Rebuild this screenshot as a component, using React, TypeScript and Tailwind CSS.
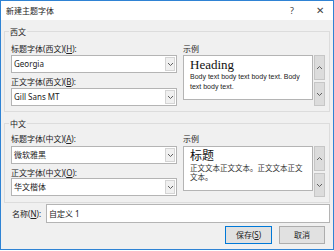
import React from "react";

const ui = { fontFamily: '"Noto Sans", "Noto Sans CJK SC", sans-serif' };

function Chevron({ up }: { up?: boolean }) {
  return (
    <svg width="7" height="5" viewBox="0 0 7 5">
      <path
        d={up ? "M1 4 L3.5 1.5 L6 4" : "M1 1 L3.5 3.5 L6 1"}
        fill="none"
        stroke="#606060"
        strokeWidth="1"
      />
    </svg>
  );
}

function Combo({ value, cjk }: { value: string; cjk?: boolean }) {
  return (
    <div className="flex h-[18px] w-[166px] items-stretch border border-[#b4b4b4] bg-white">
      <div
        className="flex flex-1 items-center pl-[2px] text-[8px] text-[#222]"
        style={cjk ? { fontFamily: '"Noto Sans CJK SC", sans-serif' } : undefined}
      >
        {value}
      </div>
      <div className="m-[1px] flex w-[10px] items-center justify-center border border-[#d4d4d4] bg-[#f0f0f0]">
        <Chevron />
      </div>
    </div>
  );
}

function Scroll() {
  return (
    <div className="flex w-[11px] flex-col gap-[2px]">
      <div className="flex h-[25px] items-center justify-center border border-[#c6c6c6] bg-[#dcdcdc]">
        <Chevron up />
      </div>
      <div className="flex h-[24px] items-center justify-center border border-[#c6c6c6] bg-[#dcdcdc]">
        <Chevron />
      </div>
    </div>
  );
}

function Group({
  title,
  h,
  pt,
  children,
}: {
  title: string;
  h: string;
  pt: string;
  children: React.ReactNode;
}) {
  return (
    <div className={`relative mx-[3px] border border-[#dcdcdc] ${h} ${pt} pl-[6px]`}>
      <span className="absolute left-[4px] top-[-6px] bg-[#f0f0f0] px-[1px] text-[8px] leading-[11px] text-[#222]">
        {title}
      </span>
      {children}
    </div>
  );
}

export default function App() {
  return (
    <div
      className="box-border flex h-[250px] w-[334px] flex-col border border-[#2f83d4] bg-[#f0f0f0] text-[#222]"
      style={ui}
    >
      {/* title bar */}
      <div className="flex h-[19px] items-center bg-white pl-[5px] text-[8px]">
        <span className="flex-1">新建主题字体</span>
        <span className="w-[10px] text-center text-[9px] text-[#444]">?</span>
        <span className="ml-[18px] mr-[8px] w-[10px] text-center text-[10px] text-[#444]">✕</span>
      </div>

      {/* 西文 */}
      <div className="mt-[11px]">
        <Group title="西文" h="h-[81px]" pt="pt-[11px]">
          <div className="flex gap-[6px]">
            <div className="flex flex-col">
              <div className="h-[11px] text-[8px] leading-[11px]">
                标题字体(西文)(<span className="underline">H</span>):
              </div>
              <div className="mt-[1px]">
                <Combo value="Georgia" />
              </div>
              <div className="mt-[3px] h-[11px] text-[8px] leading-[11px]">
                正文字体(西文)(<span className="underline">B</span>):
              </div>
              <div className="mt-[1px]">
                <Combo value="Gill Sans MT" />
              </div>
            </div>
            <div className="flex flex-col">
              <div className="h-[11px] text-[8px] leading-[11px]">示例</div>
              <div className="mt-[1px] flex gap-[1px]">
                <div className="h-[45px] w-[130px] border border-[#b4b4b4] bg-white pl-[6px] pt-[1px]">
                  <div
                    className="text-[13px] leading-[15px] text-[#111]"
                    style={{ fontFamily: '"Liberation Serif", serif' }}
                  >
                    Heading
                  </div>
                  <div
                    className="text-[7px] leading-[10px] text-[#222]"
                    style={{ fontFamily: '"Liberation Sans", sans-serif' }}
                  >
                    Body text body text body text. Body text body text.
                  </div>
                </div>
                <Scroll />
              </div>
            </div>
          </div>
        </Group>
      </div>

      {/* 中文 */}
      <div className="mt-[11px]">
        <Group title="中文" h="h-[80px]" pt="pt-[9px]">
          <div className="flex gap-[6px]">
            <div className="flex flex-col">
              <div className="h-[11px] text-[8px] leading-[11px]">
                标题字体(中文)(<span className="underline">A</span>):
              </div>
              <div className="mt-[2px]">
                <Combo value="微软雅黑" cjk />
              </div>
              <div className="mt-[3px] h-[11px] text-[8px] leading-[11px]">
                正文字体(中文)(<span className="underline">O</span>):
              </div>
              <div>
                <Combo value="华文楷体" cjk />
              </div>
            </div>
            <div className="flex flex-col">
              <div className="h-[11px] text-[8px] leading-[11px]">示例</div>
              <div className="mt-[2px] flex gap-[1px]">
                <div className="h-[45px] w-[130px] border border-[#b4b4b4] bg-white pl-[6px] pr-[8px] pt-[1px]">
                  <div
                    className="text-[12px] leading-[13px] text-[#111]"
                    style={{ fontFamily: '"Noto Sans CJK SC", sans-serif' }}
                  >
                    标题
                  </div>
                  <div
                    className="mt-[2px] text-[7.5px] leading-[9px] text-[#333]"
                    style={{ fontFamily: '"Noto Sans CJK SC", sans-serif' }}
                  >
                    正文文本正文文本。正文文本正文文本。
                  </div>
                </div>
                <Scroll />
              </div>
            </div>
          </div>
        </Group>
      </div>

      {/* name row */}
      <div className="mt-[1px] flex items-center pl-[11px] pr-[3px]">
        <span className="w-[34px] text-[8px]">
          名称(<span className="underline">N</span>):
        </span>
        <div className="flex h-[19px] flex-1 items-center border border-[#b4b4b4] bg-white pl-[2px] text-[8px]">
          自定义 1
        </div>
      </div>

      {/* buttons */}
      <div className="mt-[3px] flex justify-end gap-[7px] pr-[8px]">
        <div className="flex h-[18px] w-[47px] items-center justify-center border border-[#0078d7] bg-[#e1e1e1] text-[8px]">
          保存(<span className="underline">S</span>)
        </div>
        <div className="flex h-[18px] w-[46px] items-center justify-center border border-[#adadad] bg-[#e1e1e1] text-[8px]">
          取消
        </div>
      </div>
    </div>
  );
}
